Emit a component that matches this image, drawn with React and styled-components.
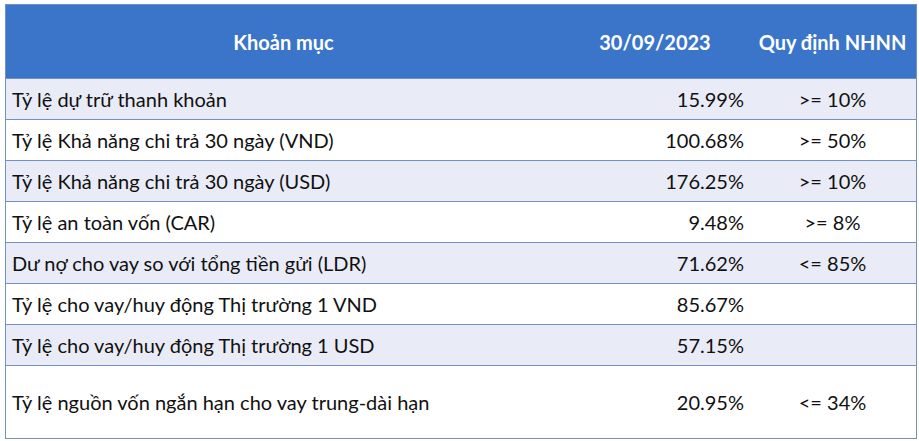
import React from 'react'
import styled, { createGlobalStyle } from 'styled-components'

const GlobalStyle = createGlobalStyle`
  body {
    margin: 0;
    background: #ffffff;
    font-family: Lato, "Noto Sans", sans-serif;
  }
`

const Page = styled.div`
  padding: 4px 4px 0 5px;
`

const Table = styled.table`
  width: 910px;
  table-layout: fixed;
  border-collapse: collapse;
  border: 1px solid #7190c4;
  font-family: Lato, "Noto Sans", sans-serif;
  font-size: 20px;
  color: #111;
`

const HeadCell = styled.th`
  background: #3a75ca;
  color: #ffffff;
  font-weight: 700;
  font-size: 20px;
  height: 73px;
  padding: 0;
  text-align: center;
  width: ${props => props.width}px;
`

const Row = styled.tr`
  background: ${props => (props.striped ? '#e9ecf6' : '#ffffff')};
  border-top: 1px solid #7190c4;
  height: ${props => (props.tall ? 73 : 41)}px;
`

const LabelCell = styled.td`
  padding: 0 6px;
  text-align: left;
  white-space: nowrap;
`

const ValueCell = styled.td`
  padding: 0 5px 0 0;
  text-align: right;
`

const RuleCell = styled.td`
  padding: 0;
  text-align: center;
`

const rows = [
  ['Tỷ lệ dự trữ thanh khoản', '15.99%', '>= 10%'],
  ['Tỷ lệ Khả năng chi trả 30 ngày (VND)', '100.68%', '>= 50%'],
  ['Tỷ lệ Khả năng chi trả 30 ngày (USD)', '176.25%', '>= 10%'],
  ['Tỷ lệ an toàn vốn (CAR)', '9.48%', '>= 8%'],
  ['Dư nợ cho vay so với tổng tiền gửi (LDR)', '71.62%', '<= 85%'],
  ['Tỷ lệ cho vay/huy động Thị trường 1 VND', '85.67%', ''],
  ['Tỷ lệ cho vay/huy động Thị trường 1 USD', '57.15%', ''],
  ['Tỷ lệ nguồn vốn ngắn hạn cho vay trung-dài hạn', '20.95%', '<= 34%'],
]

const App = () => {
  return (
    <>
      <GlobalStyle />
      <Page>
        <Table>
          <thead>
            <tr>
              <HeadCell width={555}>Khoản mục</HeadCell>
              <HeadCell width={188}>30/09/2023</HeadCell>
              <HeadCell width={167}>Quy định NHNN</HeadCell>
            </tr>
          </thead>
          <tbody>
            {rows.map((r, i) => (
              <Row key={i} striped={i % 2 === 0 && i < 7} tall={i === 7}>
                <LabelCell>{r[0]}</LabelCell>
                <ValueCell>{r[1]}</ValueCell>
                <RuleCell>{r[2]}</RuleCell>
              </Row>
            ))}
          </tbody>
        </Table>
      </Page>
    </>
  )
}

export default App
